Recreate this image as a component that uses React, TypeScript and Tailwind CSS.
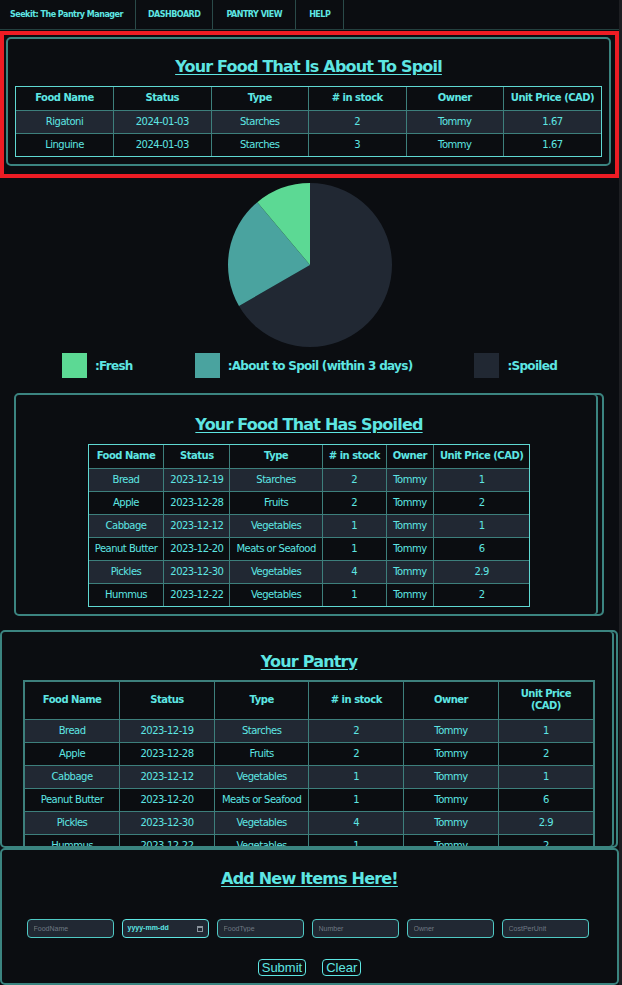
// App.tsx — Seekit pantry dashboard

import React from 'react'

type Row = { name: string; status: string; type: string; stock: number; owner: string; price: string }

const spoilSoon: Row[] = [
  { name: 'Rigatoni', status: '2024-01-03', type: 'Starches', stock: 2, owner: 'Tommy', price: '1.67' },
  { name: 'Linguine', status: '2024-01-03', type: 'Starches', stock: 3, owner: 'Tommy', price: '1.67' },
]

const spoiled: Row[] = [
  { name: 'Bread', status: '2023-12-19', type: 'Starches', stock: 2, owner: 'Tommy', price: '1' },
  { name: 'Apple', status: '2023-12-28', type: 'Fruits', stock: 2, owner: 'Tommy', price: '2' },
  { name: 'Cabbage', status: '2023-12-12', type: 'Vegetables', stock: 1, owner: 'Tommy', price: '1' },
  { name: 'Peanut Butter', status: '2023-12-20', type: 'Meats or Seafood', stock: 1, owner: 'Tommy', price: '6' },
  { name: 'Pickles', status: '2023-12-30', type: 'Vegetables', stock: 4, owner: 'Tommy', price: '2.9' },
  { name: 'Hummus', status: '2023-12-22', type: 'Vegetables', stock: 1, owner: 'Tommy', price: '2' },
]

const pantry: Row[] = [
  ...spoiled,
  { name: 'Rigatoni', status: '2024-01-03', type: 'Starches', stock: 2, owner: 'Tommy', price: '1.67' },
  { name: 'Linguine', status: '2024-01-03', type: 'Starches', stock: 3, owner: 'Tommy', price: '1.67' },
]

const headers = ['Food Name', 'Status', 'Type', '# in stock', 'Owner', 'Unit Price (CAD)']

function FoodTable({ rows, full, outer, tall }: { rows: Row[]; full?: boolean; outer: string; tall?: boolean }) {
  return (
    <div className={`border ${outer} ${full ? 'w-full' : 'inline-block'}`}>
      <table className={`border-collapse border-hidden text-[10px] leading-[12px] tracking-[-0.5px] ${full ? 'w-full table-fixed' : ''}`}>
        <thead>
          <tr className={tall ? 'h-[37px]' : 'h-[23px]'}>
            {headers.map((h) => (
              <th key={h} className={`border border-[#3d7f7c] px-[6px] font-bold ${tall ? '' : 'whitespace-nowrap'}`}>
                {h}
              </th>
            ))}
          </tr>
        </thead>
        <tbody>
          {rows.map((r, i) => (
            <tr key={i} className={`h-[23px] ${i % 2 === 0 ? 'bg-[#212833]' : 'bg-[#0b0d11]'}`}>
              <td className="border border-[#3d7f7c] px-[6px] text-center whitespace-nowrap">{r.name}</td>
              <td className="border border-[#3d7f7c] px-[6px] text-center whitespace-nowrap">{r.status}</td>
              <td className="border border-[#3d7f7c] px-[6px] text-center whitespace-nowrap">{r.type}</td>
              <td className="border border-[#3d7f7c] px-[6px] text-center">{r.stock}</td>
              <td className="border border-[#3d7f7c] px-[6px] text-center">{r.owner}</td>
              <td className="border border-[#3d7f7c] px-[6px] text-center">{r.price}</td>
            </tr>
          ))}
        </tbody>
      </table>
    </div>
  )
}

function Title({ children }: { children: React.ReactNode }) {
  return (
    <h2 className="text-center text-[16px] font-bold leading-[20px] tracking-[-0.8px] underline underline-offset-2">
      {children}
    </h2>
  )
}

function Pie() {
  // 6 spoiled, 2 about to spoil, 1 fresh — drawn clockwise from 12 o'clock
  return (
    <svg width="166" height="166" viewBox="0 0 166 166">
      <path d="M83,83 L83,1 A82,82 0 1 1 11.99,124 Z" fill="#212833" />
      <path d="M83,83 L11.99,124 A82,82 0 0 1 30.29,20.19 Z" fill="#4aa39f" />
      <path d="M83,83 L30.29,20.19 A82,82 0 0 1 83,1 Z" fill="#5cd994" />
    </svg>
  )
}

const inputCls =
  'w-[87px] h-[19px] rounded-[4px] border border-[#4fc9c4] bg-[#212833] px-[6px] text-[7px] tracking-normal text-[#9aa3ad] placeholder:text-[#6f7883] font-["Liberation_Sans",sans-serif] outline-none'

export default function App() {
  return (
    <div className="min-h-[985px] bg-[#0b0d11] text-[#5ee6e3] border-r-[3px] border-[#1d1e22] font-['DejaVu_Sans',sans-serif] tracking-[-0.5px]">
      {/* --- Navbar --- */}
      <nav className="flex h-[30px] items-stretch border-b border-[#24403f] text-[8px] font-bold">
        <a className="flex items-center border-r border-[#2a4a49] pl-[10px] pr-[12px]">Seekit: The Pantry Manager</a>
        <a className="flex items-center border-r border-[#2a4a49] px-[12px]">DASHBOARD</a>
        <a className="flex items-center border-r border-[#2a4a49] px-[13px]">PANTRY VIEW</a>
        <a className="flex items-center border-r border-[#2a4a49] px-[13px]">HELP</a>
      </nav>

      {/* --- About to spoil (highlighted) --- */}
      <div className="mt-px border-4 border-[#ed1c24] pt-[2px] pl-[2px] pr-[4px] pb-[8px]">
        <section className="rounded-[5px] border-2 border-[#3b8480] px-[7px] pt-[18px] pb-[7px]">
          <Title>Your Food That Is About To Spoil</Title>
          <div className="mt-[9px]">
            <FoodTable rows={spoilSoon} full outer="border-[#5fd8d2]" />
          </div>
        </section>
      </div>

      {/* --- Pie chart + legend --- */}
      <div className="mt-[4px] flex justify-center pl-[1px]">
        <Pie />
      </div>
      <div className="mt-[5px] flex items-center justify-evenly text-[12px] font-bold tracking-[-0.7px]">
        <div className="flex items-center gap-[8px]">
          <span className="h-[25px] w-[25px] bg-[#5cd994]" />
          <span>:Fresh</span>
        </div>
        <div className="flex items-center gap-[8px]">
          <span className="h-[25px] w-[25px] bg-[#4aa39f]" />
          <span>:About to Spoil (within 3 days)</span>
        </div>
        <div className="flex items-center gap-[8px]">
          <span className="h-[25px] w-[25px] bg-[#212833]" />
          <span>:Spoiled</span>
        </div>
      </div>

      {/* --- Spoiled --- */}
      <section className="mt-[15px] ml-[14px] mr-[15px] rounded-[5px] border-2 border-[#3b8480] pt-[20px] pb-[7px] shadow-[inset_-4px_0_0_#0b0d11,inset_-6px_0_0_#3b8480]">
        <Title>Your Food That Has Spoiled</Title>
        <div className="mt-[9px] flex justify-center">
          <FoodTable rows={spoiled} outer="border-[#5fd8d2]" />
        </div>
      </section>

      <section className="mt-[14px] mr-px h-[218px] overflow-hidden rounded-[5px] border-2 border-[#3b8480] px-[21px] pt-[20px] shadow-[inset_-2px_0_0_#0b0d11,inset_-4px_0_0_#3b8480]">
        <Title>Your Pantry</Title>
        <div className="mt-[8px]">
          <FoodTable rows={pantry} full tall outer="border-2 border-[#3d7f7c]" />
        </div>
      </section>

      {/* --- Add new items --- */}
      <section className="rounded-[5px] border-2 border-[#3b8480] pt-[19px] pb-[7px]">
        <Title>Add New Items Here!</Title>
        <div className="mt-[30px] flex justify-center gap-[8px] pr-[4px]">
          <input className={inputCls} placeholder="FoodName" />
          <div className="flex h-[19px] w-[87px] items-center justify-between rounded-[4px] border border-[#5ee6e3] bg-[#212833] px-[5px] text-[7px] font-bold tracking-normal text-[#5ee6e3] font-['Liberation_Sans',sans-serif]">
            <span>yyyy-mm-dd</span>
            <svg width="6" height="6" viewBox="0 0 6 6">
              <rect x="0.5" y="0.5" width="5" height="5" fill="none" stroke="#8a939c" strokeWidth="1" />
              <rect x="0.5" y="0.5" width="5" height="1.5" fill="#8a939c" />
            </svg>
          </div>
          <input className={inputCls} placeholder="FoodType" />
          <input className={inputCls} placeholder="Number" />
          <input className={inputCls} placeholder="Owner" />
          <input className={inputCls} placeholder="CostPerUnit" />
        </div>
        <div className="mt-[21px] flex justify-center gap-[16px] font-['Liberation_Sans',sans-serif] text-[13px] leading-none tracking-normal">
          <button className="rounded-[4px] border border-[#5ee6e3] bg-[#0b0d11] px-[3px] py-[1px] text-[#5ee6e3]">Submit</button>
          <button className="rounded-[4px] border border-[#5ee6e3] bg-[#0b0d11] px-[3px] py-[1px] text-[#5ee6e3]">Clear</button>
        </div>
      </section>
    </div>
  )
}
